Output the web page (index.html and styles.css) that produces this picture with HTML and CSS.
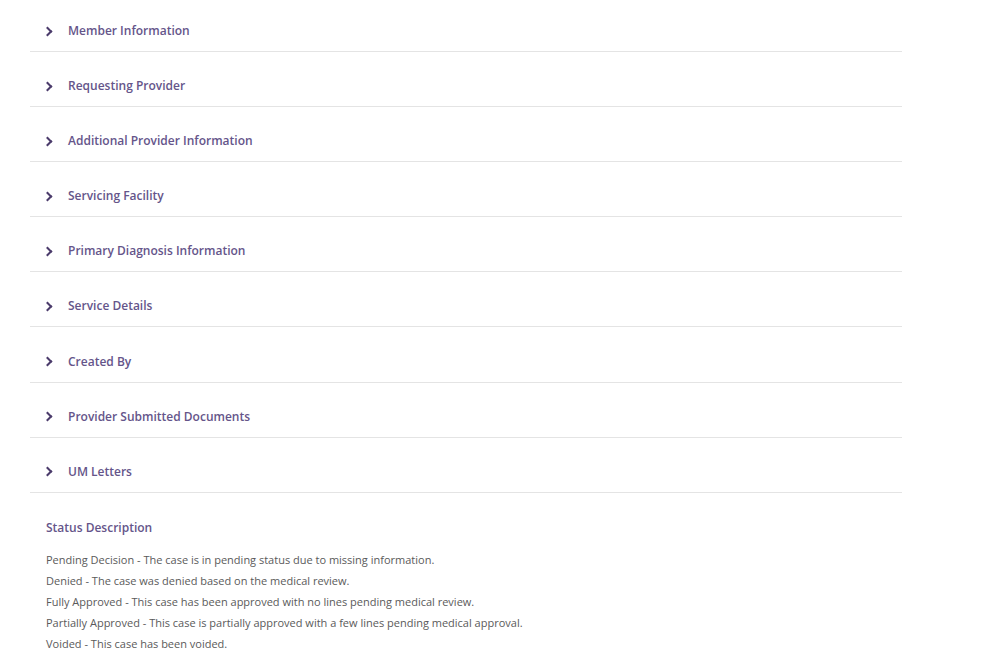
FILE: index.html
```html
<!DOCTYPE html>
<html lang="en">
<head>
  <meta charset="UTF-8" />
  <title>Case Details</title>
  <link rel="stylesheet" href="styles.css">
</head>
<body>
  <div class="page">
    <div class="accordion">
      <div class="acc-item"><span class="chevron"></span>Member Information</div>
      <div class="acc-item"><span class="chevron"></span>Requesting Provider</div>
      <div class="acc-item"><span class="chevron"></span>Additional Provider Information</div>
      <div class="acc-item"><span class="chevron"></span>Servicing Facility</div>
      <div class="acc-item"><span class="chevron"></span>Primary Diagnosis Information</div>
      <div class="acc-item"><span class="chevron"></span>Service Details</div>
      <div class="acc-item"><span class="chevron"></span>Created By</div>
      <div class="acc-item"><span class="chevron"></span>Provider Submitted Documents</div>
      <div class="acc-item"><span class="chevron"></span>UM Letters</div>
    </div>

    <div class="status">
      <h4>Status Description</h4>
      <p>Pending Decision - The case is in pending status due to missing information.</p>
      <p>Denied - The case was denied based on the medical review.</p>
      <p>Fully Approved - This case has been approved with no lines pending medical review.</p>
      <p>Partially Approved - This case is partially approved with a few lines pending medical approval.</p>
      <p>Voided - This case has been voided.</p>
    </div>
  </div>
</body>
</html>
```

FILE: styles.css
```css
body {
  margin: 0;
  background: #fff;
  font-family: "Open Sans", Arial, sans-serif;
}

.page {
  padding: 0 0 0 30px;
  width: 872px;
}

.acc-item {
  display: flex;
  align-items: center;
  padding: 24.1px 0 10px 14px;
  line-height: 20px;
  font-size: 12px;
  font-weight: 600;
  color: #65558a;
  border-bottom: 1px solid #e4e4e4;
  cursor: pointer;
}

.acc-item:first-child {
  padding-top: 21px;
}

.chevron {
  width: 5px;
  height: 5px;
  border-right: 2px solid #4b3b6b;
  border-top: 2px solid #4b3b6b;
  transform: rotate(45deg);
  margin-right: 17px;
}

.status {
  padding: 25px 0 0 16px;
}

.status h4 {
  margin: 0 0 11px;
  font-size: 12px;
  font-weight: 600;
  color: #65558a;
  line-height: 20px;
}

.status p {
  margin: 0;
  font-size: 11px;
  line-height: 21px;
  color: #5a5a5a;
}
```
